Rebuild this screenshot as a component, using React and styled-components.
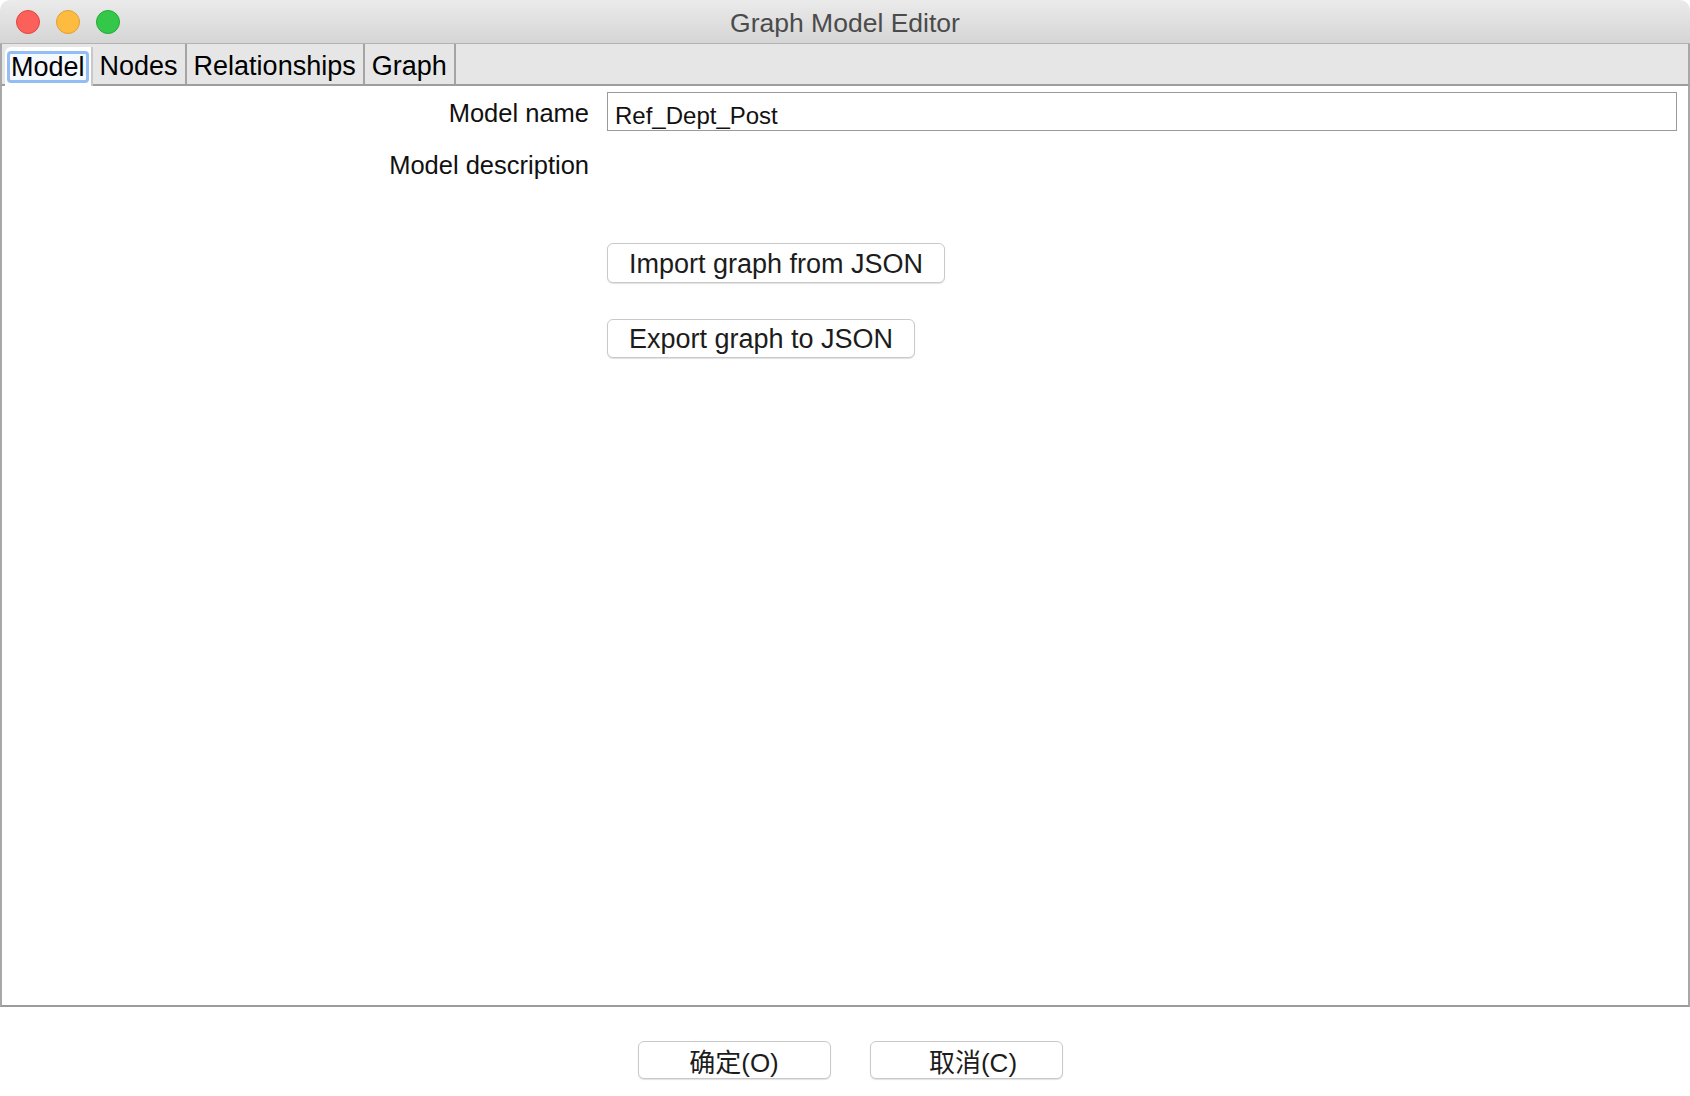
import React from 'react';
import styled, { createGlobalStyle } from 'styled-components';

const GlobalStyle = createGlobalStyle`
  html, body {
    margin: 0;
    padding: 0;
    background: #ffffff;
  }
  * {
    box-sizing: border-box;
  }
`;

const Window = styled.div`
  width: 1690px;
  height: 1096px;
  display: flex;
  flex-direction: column;
  background: #ffffff;
  overflow: hidden;
  font-family: "Liberation Sans", "Noto Sans CJK SC", Arial, sans-serif;
  color: #1a1a1a;
`;

const TitleBar = styled.div`
  height: 44px;
  flex: none;
  display: grid;
  grid-template-columns: 1fr auto 1fr;
  align-items: center;
  background: linear-gradient(#ebebeb, #d5d5d5);
  border-bottom: 1px solid #b2b2b2;
  border-radius: 10px 10px 0 0;
`;

const Lights = styled.div`
  display: flex;
  gap: 16px;
  padding-left: 16px;
`;

const Light = styled.span`
  width: 24px;
  height: 24px;
  border-radius: 50%;
  background: ${p => p.fill};
  border: 1px solid ${p => p.edge};
`;

const Title = styled.div`
  font-size: 26.5px;
  color: #4b4b4b;
  padding-top: 4px;
`;

const TabStrip = styled.div`
  height: 42px;
  flex: none;
  display: flex;
  align-items: stretch;
  padding-left: 3px;
  background: #e6e6e6;
  border-bottom: 2px solid #9e9e9e;
  border-left: 2px solid #a8a8a8;
  border-right: 2px solid #a8a8a8;
`;

const Tab = styled.div`
  display: flex;
  align-items: center;
  padding: 4px ${p => (p.active ? 2 : 7)}px 0;
  font-size: 27px;
  color: #000;
  border-right: 2px solid #a4a4a4;
  background: ${p => (p.active ? '#ffffff' : 'transparent')};
  margin-top: ${p => (p.active ? 3 : 0)}px;
  margin-bottom: ${p => (p.active ? -2 : 0)}px;
  border-radius: ${p => (p.active ? '6px 0 0 0' : '0')};
  border-right-color: ${p => (p.active ? '#c8c8c8' : '#a4a4a4')};
`;

const FocusRing = styled.span`
  padding: 0 1px;
  line-height: 26px;
  border: 3px solid #94bdf3;
  border-radius: 4px;
  background: #f4f8ff;
  margin-top: -4px;
`;

const Panel = styled.div`
  flex: none;
  height: 921px;
  background: #ffffff;
  border-left: 2px solid #a8a8a8;
  border-right: 2px solid #a8a8a8;
  border-bottom: 2px solid #9c9c9c;
  padding: 6px 11px 0 0;
`;

const Form = styled.div`
  display: grid;
  grid-template-columns: 587px 1fr;
  column-gap: 18px;
  align-items: start;
`;

const Label = styled.div`
  font-size: 25.5px;
  text-align: right;
  line-height: ${p => p.lh || 39}px;
  margin-top: ${p => p.top || 0}px;
  padding-top: ${p => (p.lh ? 0 : 2)}px;
  color: #111;
`;

const Field = styled.div`
  height: 39px;
  border: 1px solid #9a9a9a;
  display: flex;
  align-items: center;
  padding: 8px 7px 0;
  font-size: 24px;
  color: #111;
`;

const Description = styled.div`
  height: 80px;
`;

const ButtonStack = styled.div`
  display: flex;
  flex-direction: column;
  align-items: flex-start;
  gap: 36px;
  margin-top: 30px;
`;

const Button = styled.button`
  height: ${p => p.h || 40}px;
  padding: 2px 21px 0;
  font-family: "Liberation Sans", "Noto Sans CJK SC", Arial, sans-serif;
  font-size: 27px;
  color: #1c1c1c;
  background: #ffffff;
  border: 1px solid #c9c9c9;
  border-radius: 6px;
  box-shadow: 0 1px 1px rgba(0, 0, 0, 0.12);
`;

const Footer = styled.div`
  flex: 1;
  display: flex;
  justify-content: center;
  align-items: flex-start;
  gap: 39px;
  padding: 34px 0 0 10px;
`;

const DialogButton = styled(Button)`
  width: 193px;
  height: 38px;
  padding: 0 0 8px ${p => p.shift || 0}px;
  font-size: 26px;
`;

const tabs = ['Model', 'Nodes', 'Relationships', 'Graph'];

export default function App() {
  return (
    <Window>
      <GlobalStyle />
      <TitleBar>
        <Lights>
          <Light fill="#fc605b" edge="#e0463f" />
          <Light fill="#fdbc40" edge="#e0a030" />
          <Light fill="#34c84a" edge="#24a834" />
        </Lights>
        <Title>Graph Model Editor</Title>
        <div />
      </TitleBar>
      <TabStrip>
        {tabs.map((t, i) => (
          <Tab key={t} active={i === 0}>
            {i === 0 ? <FocusRing>{t}</FocusRing> : t}
          </Tab>
        ))}
      </TabStrip>
      <Panel>
        <Form>
          <Label>Model name</Label>
          <Field>Ref_Dept_Post</Field>
          <Label top={17} lh={30}>Model description</Label>
          <div>
            <Description />
            <ButtonStack>
              <Button>Import graph from JSON</Button>
              <Button h={39}>Export graph to JSON</Button>
            </ButtonStack>
          </div>
        </Form>
      </Panel>
      <Footer>
        <DialogButton>确定(O)</DialogButton>
        <DialogButton shift={14}>取消(C)</DialogButton>
      </Footer>
    </Window>
  );
}
